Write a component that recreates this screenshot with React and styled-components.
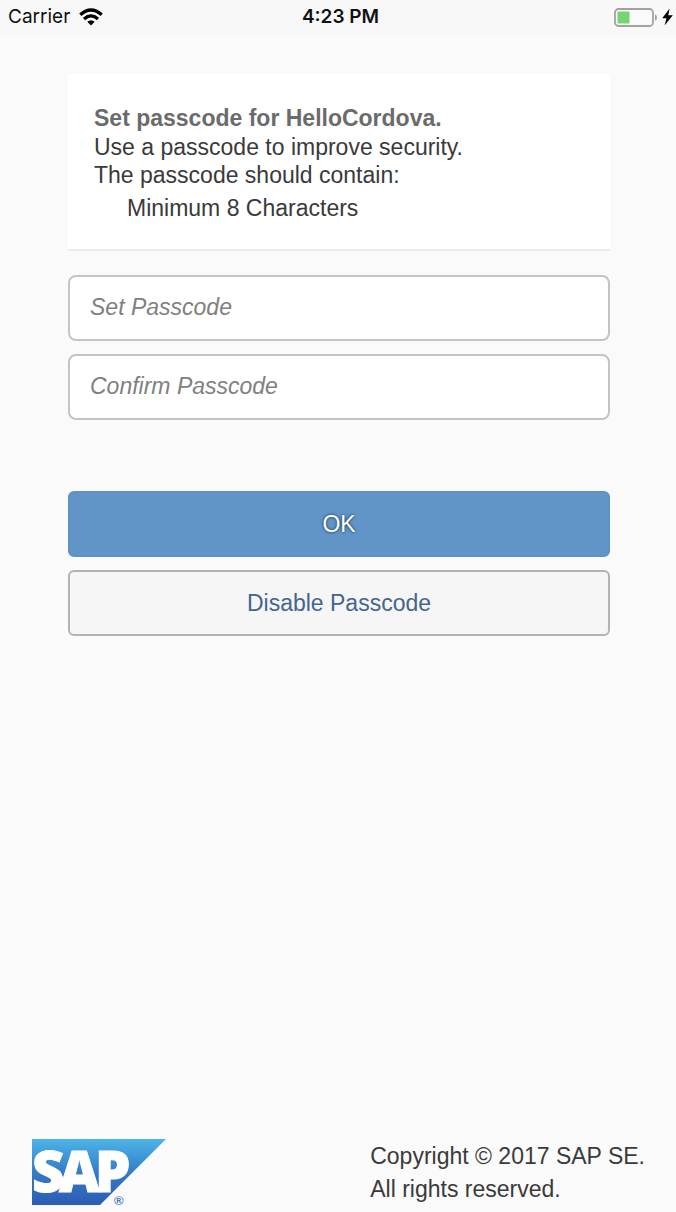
import React from "react";
import styled, { createGlobalStyle } from "styled-components";

const GlobalStyle = createGlobalStyle`
  *, *::before, *::after { box-sizing: border-box; }
  body {
    margin: 0;
    background: #fafafa;
    color: #3a3a3a;
    font-family: "Liberation Sans", Arial, Helvetica, sans-serif;
    font-size: 23px;
  }
`;

const Screen = styled.div`
  min-height: 100vh;
  display: flex;
  flex-direction: column;
`;

const StatusBar = styled.header`
  display: grid;
  grid-template-columns: 1fr auto 1fr;
  align-items: center;
  height: 34px;
  padding: 0 3px 0 8px;
  background: #f8f8f8;
  color: #111;
  font-family: Inter, Roboto, sans-serif;
  font-size: 19px;
  line-height: 34px;
`;

const StatusGroup = styled.div`
  display: flex;
  align-items: center;
  justify-content: ${(p) => (p.$end ? "flex-end" : "flex-start")};
  gap: ${(p) => (p.$end ? "4px" : "9px")};
`;

const Time = styled.time`
  font-weight: 600;
`;

const Main = styled.main`
  flex: 1;
  display: flex;
  flex-direction: column;
  padding: 40px 66px 40px 68px;
`;

const InfoCard = styled.section`
  padding: 29px 26px 22px;
  background: #fff;
  border-bottom: 2px solid #ececec;
`;

const Title = styled.h1`
  margin: 0;
  color: #6b6b6b;
  font-size: 23px;
  font-weight: 700;
  line-height: 30px;
`;

const Description = styled.p`
  margin: 0;
  line-height: 28px;
`;

const Rules = styled.ul`
  margin: 0;
  padding: 0 0 0 33px;
  list-style: none;
  line-height: 38px;
`;

const Form = styled.form`
  display: flex;
  flex-direction: column;
  margin-top: 24px;
`;

const Stack = styled.div`
  display: flex;
  flex-direction: column;
  gap: 13px;
  & + & {
    margin-top: 71px;
  }
`;

const PasscodeInput = styled.input`
  width: 100%;
  height: 66px;
  padding: 0 20px 2px;
  border: 2px solid #c4c4c4;
  border-radius: 8px;
  background: #fff;
  color: #3a3a3a;
  font: inherit;
  &::placeholder {
    color: #808080;
    font-style: italic;
    opacity: 1;
  }
`;

const Button = styled.button`
  height: 66px;
  padding: 0 20px;
  border: 2px solid ${(p) => (p.$primary ? "#5c92c8" : "#b3b3b3")};
  border-radius: 6px;
  background: ${(p) => (p.$primary ? "#6195c8" : "#f6f6f6")};
  color: ${(p) => (p.$primary ? "#fff" : "#44658f")};
  text-shadow: ${(p) => (p.$primary ? "0 0 3px rgba(0, 0, 0, 0.8)" : "none")};
  font: inherit;
  cursor: pointer;
`;

const Footer = styled.footer`
  display: flex;
  justify-content: space-between;
  align-items: flex-end;
  padding: 0 31px 6px 32px;
`;

const Copyright = styled.p`
  margin: 0;
  line-height: 33px;
`;

const Logo = styled.svg`
  display: block;
  overflow: visible;
`;

const WifiIcon = () => (
  <svg width="24" height="18" viewBox="0 0 24 18" aria-hidden="true">
    <g fill="none" stroke="#000" strokeWidth="3.3">
      <path d="M1.3 6.7Q12 -2.7 22.7 6.7" />
      <path d="M5 10.9Q12 4.9 19 10.9" />
    </g>
    <path d="M8.3 13.8Q12 10.8 15.7 13.8L12 17.4Z" />
  </svg>
);

const BatteryIcon = () => (
  <svg width="44" height="19" viewBox="0 0 44 19" aria-hidden="true">
    <rect x="1" y="1" width="38" height="17" rx="3.5" fill="#fafafa" stroke="#a2a2a2" strokeWidth="1.8" />
    <rect x="3.5" y="3.5" width="12" height="12" rx="1" fill="#76d572" />
    <path d="M41 6.3Q43 7 43 9.5T41 12.7Z" fill="#a2a2a2" />
  </svg>
);

const BoltIcon = () => (
  <svg width="11" height="18" viewBox="0 0 11 18" aria-hidden="true">
    <path d="M7.6 0.6L0.2 10.2H4.5L2.6 17.6L10.8 7.2H6.3Z" />
  </svg>
);

const SapLogo = () => (
  <Logo width="134" height="67" viewBox="0 0 134 67" role="img" aria-label="SAP">
    <defs>
      <linearGradient id="sap-blue" x1="0" y1="0" x2="0" y2="1">
        <stop offset="0" stopColor="#4cb5e8" />
        <stop offset="0.5" stopColor="#347cc7" />
        <stop offset="1" stopColor="#2c5cb5" />
      </linearGradient>
    </defs>
    <path d="M0 0H134L68 66H0Z" fill="url(#sap-blue)" />
    <text
      x="0 27 63"
      y="53"
      fill="#fff"
      stroke="#fff"
      strokeWidth="1"
      fontFamily="'Open Sans', sans-serif"
      fontWeight="800"
      fontSize="56"
    >
      SAP
    </text>
    <text x="82" y="66" fill="#4a78bd" fontFamily="'Liberation Sans', sans-serif" fontWeight="700" fontSize="13">
      ®
    </text>
  </Logo>
);

export default function App() {
  return (
    <>
      <GlobalStyle />
      <Screen>
        <StatusBar>
          <StatusGroup>
            <span>Carrier</span>
            <WifiIcon />
          </StatusGroup>
          <Time>4:23 PM</Time>
          <StatusGroup $end>
            <BatteryIcon />
            <BoltIcon />
          </StatusGroup>
        </StatusBar>
        <Main>
          <InfoCard>
            <Title>Set passcode for HelloCordova.</Title>
            <Description>Use a passcode to improve security.</Description>
            <Description>The passcode should contain:</Description>
            <Rules>
              <li>Minimum 8 Characters</li>
            </Rules>
          </InfoCard>
          <Form onSubmit={(e) => e.preventDefault()}>
            <Stack>
              <PasscodeInput type="password" placeholder="Set Passcode" aria-label="Set Passcode" autoComplete="new-password" />
              <PasscodeInput type="password" placeholder="Confirm Passcode" aria-label="Confirm Passcode" autoComplete="new-password" />
            </Stack>
            <Stack>
              <Button type="submit" $primary>OK</Button>
              <Button type="button">Disable Passcode</Button>
            </Stack>
          </Form>
        </Main>
        <Footer>
          <SapLogo />
          <Copyright>
            Copyright © 2017 SAP SE.
            <br />
            All rights reserved.
          </Copyright>
        </Footer>
      </Screen>
    </>
  );
}
